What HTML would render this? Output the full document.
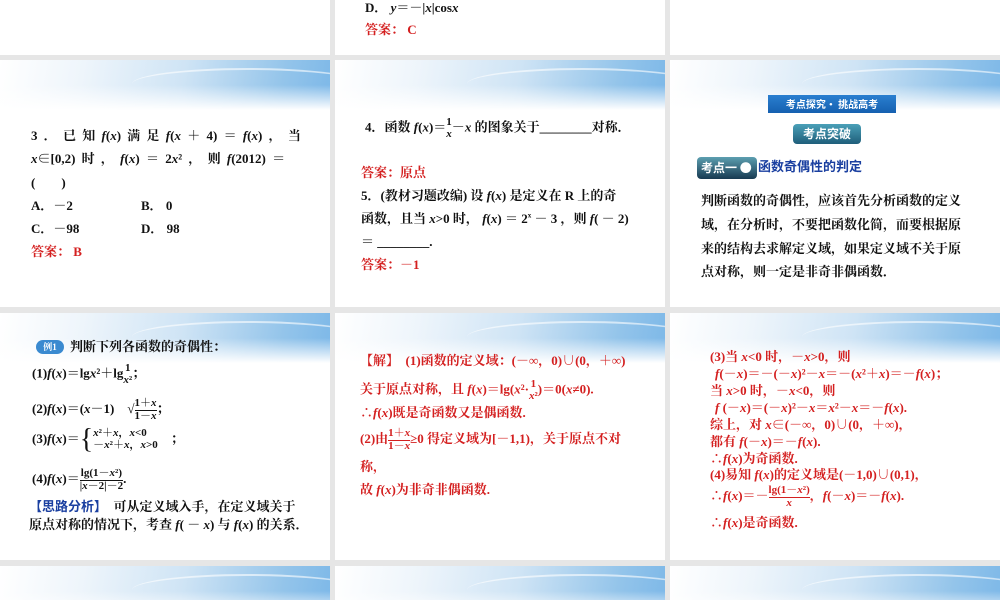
<!DOCTYPE html>
<html><head><meta charset="utf-8"><style>
*{margin:0;padding:0}
body{width:1000px;height:600px;background:#e6e6e6;position:relative;overflow:hidden;font-family:"Liberation Serif","Noto Serif CJK SC","Noto Sans CJK SC",serif;font-weight:bold;font-size:13px;color:#111}
.s{position:absolute;background:#fff;overflow:hidden}
.h{position:absolute;left:0;top:0;right:0;height:50px;background:linear-gradient(180deg,rgba(255,255,255,0) 0%,rgba(255,255,255,0) 50%,#fff 100%),linear-gradient(100deg,#fff 0%,#eef5fb 25%,#cfe4f5 55%,#93c4ea 85%,#7db8e8 100%)}
.h:after{content:"";position:absolute;left:40%;top:8px;width:70%;height:30px;border-top:2px solid rgba(255,255,255,.6);border-radius:50%}
.t{position:absolute;white-space:nowrap;line-height:1}
.r{color:#d42020}
i{font-style:italic}
.fr{display:inline-block;vertical-align:middle;text-align:center;font-size:11px;line-height:1.05}
.fr span{display:block}
.fr .n{border-bottom:1px solid #111}
.b{color:#1a3fa0;font-family:"Liberation Sans","Noto Sans CJK SC",sans-serif}
</style></head><body>
<!-- row1 -->
<div class="s" style="left:0;top:0;width:330px;height:55px"></div>
<div class="s" style="left:335px;top:0;width:330px;height:55px">
<div class="t" style="left:30px;top:1px">D． <i>y</i>＝－|<i>x</i>|cos<i>x</i></div>
<div class="t r" style="left:30px;top:23px">答案： C</div></div>
<div class="s" style="left:670px;top:0;width:330px;height:55px"></div>
<!-- row2 -->
<div class="s" style="left:0;top:60px;width:330px;height:247px"><div class="h"></div>
<div class="t" style="left:31px;top:69px;word-spacing:3px">3 ． 已 知 <i>f</i>(<i>x</i>) 满 足 <i>f</i>(<i>x</i> ＋ 4) ＝ <i>f</i>(<i>x</i>) ， 当</div>
<div class="t" style="left:31px;top:92px;word-spacing:3px"><i>x</i>∈[0,2) 时 ，  <i>f</i>(<i>x</i>) ＝ 2<i>x</i>² ， 则 <i>f</i>(2012) ＝</div>
<div class="t" style="left:31px;top:116px">(　　)</div>
<div class="t" style="left:31px;top:139px">A．－2</div><div class="t" style="left:141px;top:139px">B． 0</div>
<div class="t" style="left:31px;top:162px">C．－98</div><div class="t" style="left:141px;top:162px">D． 98</div>
<div class="t r" style="left:31px;top:185px">答案： B</div></div>
<div class="s" style="left:335px;top:60px;width:330px;height:247px"><div class="h"></div>
<div class="t" style="left:30px;top:57px">4．函数 <i>f</i>(<i>x</i>)＝<span class="fr"><span>1</span><span><i>x</i></span></span>－<i>x</i> 的图象关于________对称．</div>
<div class="t r" style="left:26px;top:106px">答案：原点</div>
<div class="t" style="left:26px;top:129px">5．(教材习题改编) 设 <i>f</i>(<i>x</i>) 是定义在 R 上的奇</div>
<div class="t" style="left:26px;top:152px">函数，且当 <i>x</i>&gt;0 时， <i>f</i>(<i>x</i>) ＝ 2<sup style="font-size:7px">x</sup> － 3 ，则 <i>f</i>( － 2)</div>
<div class="t" style="left:26px;top:175px">＝ ________.</div>
<div class="t r" style="left:26px;top:198px">答案：－1</div></div>
<div class="s" style="left:670px;top:60px;width:330px;height:247px"><div class="h"></div>
<div class="t" style="left:98px;top:35px;width:128px;height:18px;background:linear-gradient(#2a7fd0,#1560b0);color:#fff;font-family:'Noto Sans CJK SC',sans-serif;font-size:10px;line-height:18px;text-align:center">考点探究• 挑战高考</div>
<div class="t" style="left:123px;top:64px;width:68px;height:20px;border-radius:4px;background:linear-gradient(#4aa0b8,#1f5e7a);color:#fff;font-family:'Noto Sans CJK SC',sans-serif;font-size:12px;line-height:20px;text-align:center">考点突破</div>
<div class="t" style="left:27px;top:97px;width:56px;height:22px;border-radius:4px;background:linear-gradient(#5c9fb0,#173a52);color:#fff;font-family:'Noto Sans CJK SC',sans-serif;font-size:12px;line-height:22px;padding-left:4px">考点一 ●</div>
<div class="t b" style="left:88px;top:100px">函数奇偶性的判定</div>
<div class="t" style="left:31px;top:134px">判断函数的奇偶性，应该首先分析函数的定义</div>
<div class="t" style="left:31px;top:158px">域，在分析时，不要把函数化简，而要根据原</div>
<div class="t" style="left:31px;top:182px">来的结构去求解定义域，如果定义域不关于原</div>
<div class="t" style="left:31px;top:205px">点对称，则一定是非奇非偶函数．</div></div>
<!-- row3 -->
<div class="s" style="left:0;top:313px;width:330px;height:247px"><div class="h"></div>
<div class="t" style="left:36px;top:27px;width:28px;height:14px;border-radius:7px;background:#3a8ad0;color:#fff;font-size:9px;line-height:14px;text-align:center">例1</div>
<div class="t" style="left:70px;top:27px">判断下列各函数的奇偶性：</div>
<div class="t" style="left:32px;top:50px">(1)<i>f</i>(<i>x</i>)＝lg<i>x</i>²＋lg<span class="fr"><span>1</span><span><i>x</i>²</span></span>；</div>
<div class="t" style="left:32px;top:85px">(2)<i>f</i>(<i>x</i>)＝(<i>x</i>－1)　√<span class="fr"><span class="n">1＋<i>x</i></span><span>1－<i>x</i></span></span>；</div>
<div class="t" style="left:32px;top:113px">(3)<i>f</i>(<i>x</i>)＝<span style="font-size:28px;font-weight:normal;vertical-align:middle">{</span><span class="fr" style="text-align:left"><span><i>x</i>²＋<i>x</i>，<i>x</i>&lt;0</span><span>－<i>x</i>²＋<i>x</i>，<i>x</i>&gt;0</span></span>　；</div>
<div class="t" style="left:32px;top:155px">(4)<i>f</i>(<i>x</i>)＝<span class="fr"><span class="n">lg(1－<i>x</i>²)</span><span>|<i>x</i>－2|－2</span></span>.</div>
<div class="t" style="left:29px;top:187px"><span class="b">【思路分析】</span>　可从定义域入手，在定义域关于</div>
<div class="t" style="left:29px;top:205px">原点对称的情况下，考查 <i>f</i>( － <i>x</i>) 与 <i>f</i>(<i>x</i>) 的关系．</div></div>
<div class="s r" style="left:335px;top:313px;width:330px;height:247px"><div class="h"></div>
<div class="t r" style="left:25px;top:41px">【解】　(1)函数的定义域：(－∞，0)∪(0，＋∞)</div>
<div class="t r" style="left:25px;top:66px">关于原点对称，且 <i>f</i>(<i>x</i>)＝lg(<i>x</i>²·<span class="fr"><span>1</span><span><i>x</i>²</span></span>)＝0(<i>x</i>≠0).</div>
<div class="t r" style="left:25px;top:93px">∴<i>f</i>(<i>x</i>)既是奇函数又是偶函数.</div>
<div class="t r" style="left:25px;top:115px">(2)由<span class="fr"><span style="border-bottom:1px solid #d42020">1＋<i>x</i></span><span>1－<i>x</i></span></span>≥0 得定义域为[－1,1)，关于原点不对</div>
<div class="t r" style="left:25px;top:147px">称，</div>
<div class="t r" style="left:25px;top:170px">故 <i>f</i>(<i>x</i>)为非奇非偶函数.</div></div>
<div class="s" style="left:670px;top:313px;width:330px;height:247px"><div class="h"></div>
<div class="t r" style="left:40px;top:37px">(3)当 <i>x</i>&lt;0 时，－<i>x</i>&gt;0，则</div>
<div class="t r" style="left:45px;top:54px"><i>f</i>(－<i>x</i>)＝－(－<i>x</i>)²－<i>x</i>＝－(<i>x</i>²＋<i>x</i>)＝－<i>f</i>(<i>x</i>)；</div>
<div class="t r" style="left:40px;top:71px">当 <i>x</i>&gt;0 时，－<i>x</i>&lt;0，则</div>
<div class="t r" style="left:45px;top:88px"><i>f</i> (－<i>x</i>)＝(－<i>x</i>)²－<i>x</i>＝<i>x</i>²－<i>x</i>＝－<i>f</i>(<i>x</i>).</div>
<div class="t r" style="left:40px;top:105px">综上，对 <i>x</i>∈(－∞，0)∪(0，＋∞)，</div>
<div class="t r" style="left:40px;top:122px">都有 <i>f</i>(－<i>x</i>)＝－<i>f</i>(<i>x</i>).</div>
<div class="t r" style="left:40px;top:139px">∴<i>f</i>(<i>x</i>)为奇函数.</div>
<div class="t r" style="left:40px;top:155px">(4)易知 <i>f</i>(<i>x</i>)的定义域是(－1,0)∪(0,1)，</div>
<div class="t r" style="left:40px;top:172px">∴<i>f</i>(<i>x</i>)＝－<span class="fr"><span style="border-bottom:1px solid #d42020">lg(1－<i>x</i>²)</span><span><i>x</i></span></span>，<i>f</i>(－<i>x</i>)＝－<i>f</i>(<i>x</i>).</div>
<div class="t r" style="left:40px;top:203px">∴<i>f</i>(<i>x</i>)是奇函数.</div></div>
<!-- row4 -->
<div class="s" style="left:0;top:566px;width:330px;height:34px"><div class="h"></div></div>
<div class="s" style="left:335px;top:566px;width:330px;height:34px"><div class="h"></div></div>
<div class="s" style="left:670px;top:566px;width:330px;height:34px"><div class="h"></div></div>
</body></html>
